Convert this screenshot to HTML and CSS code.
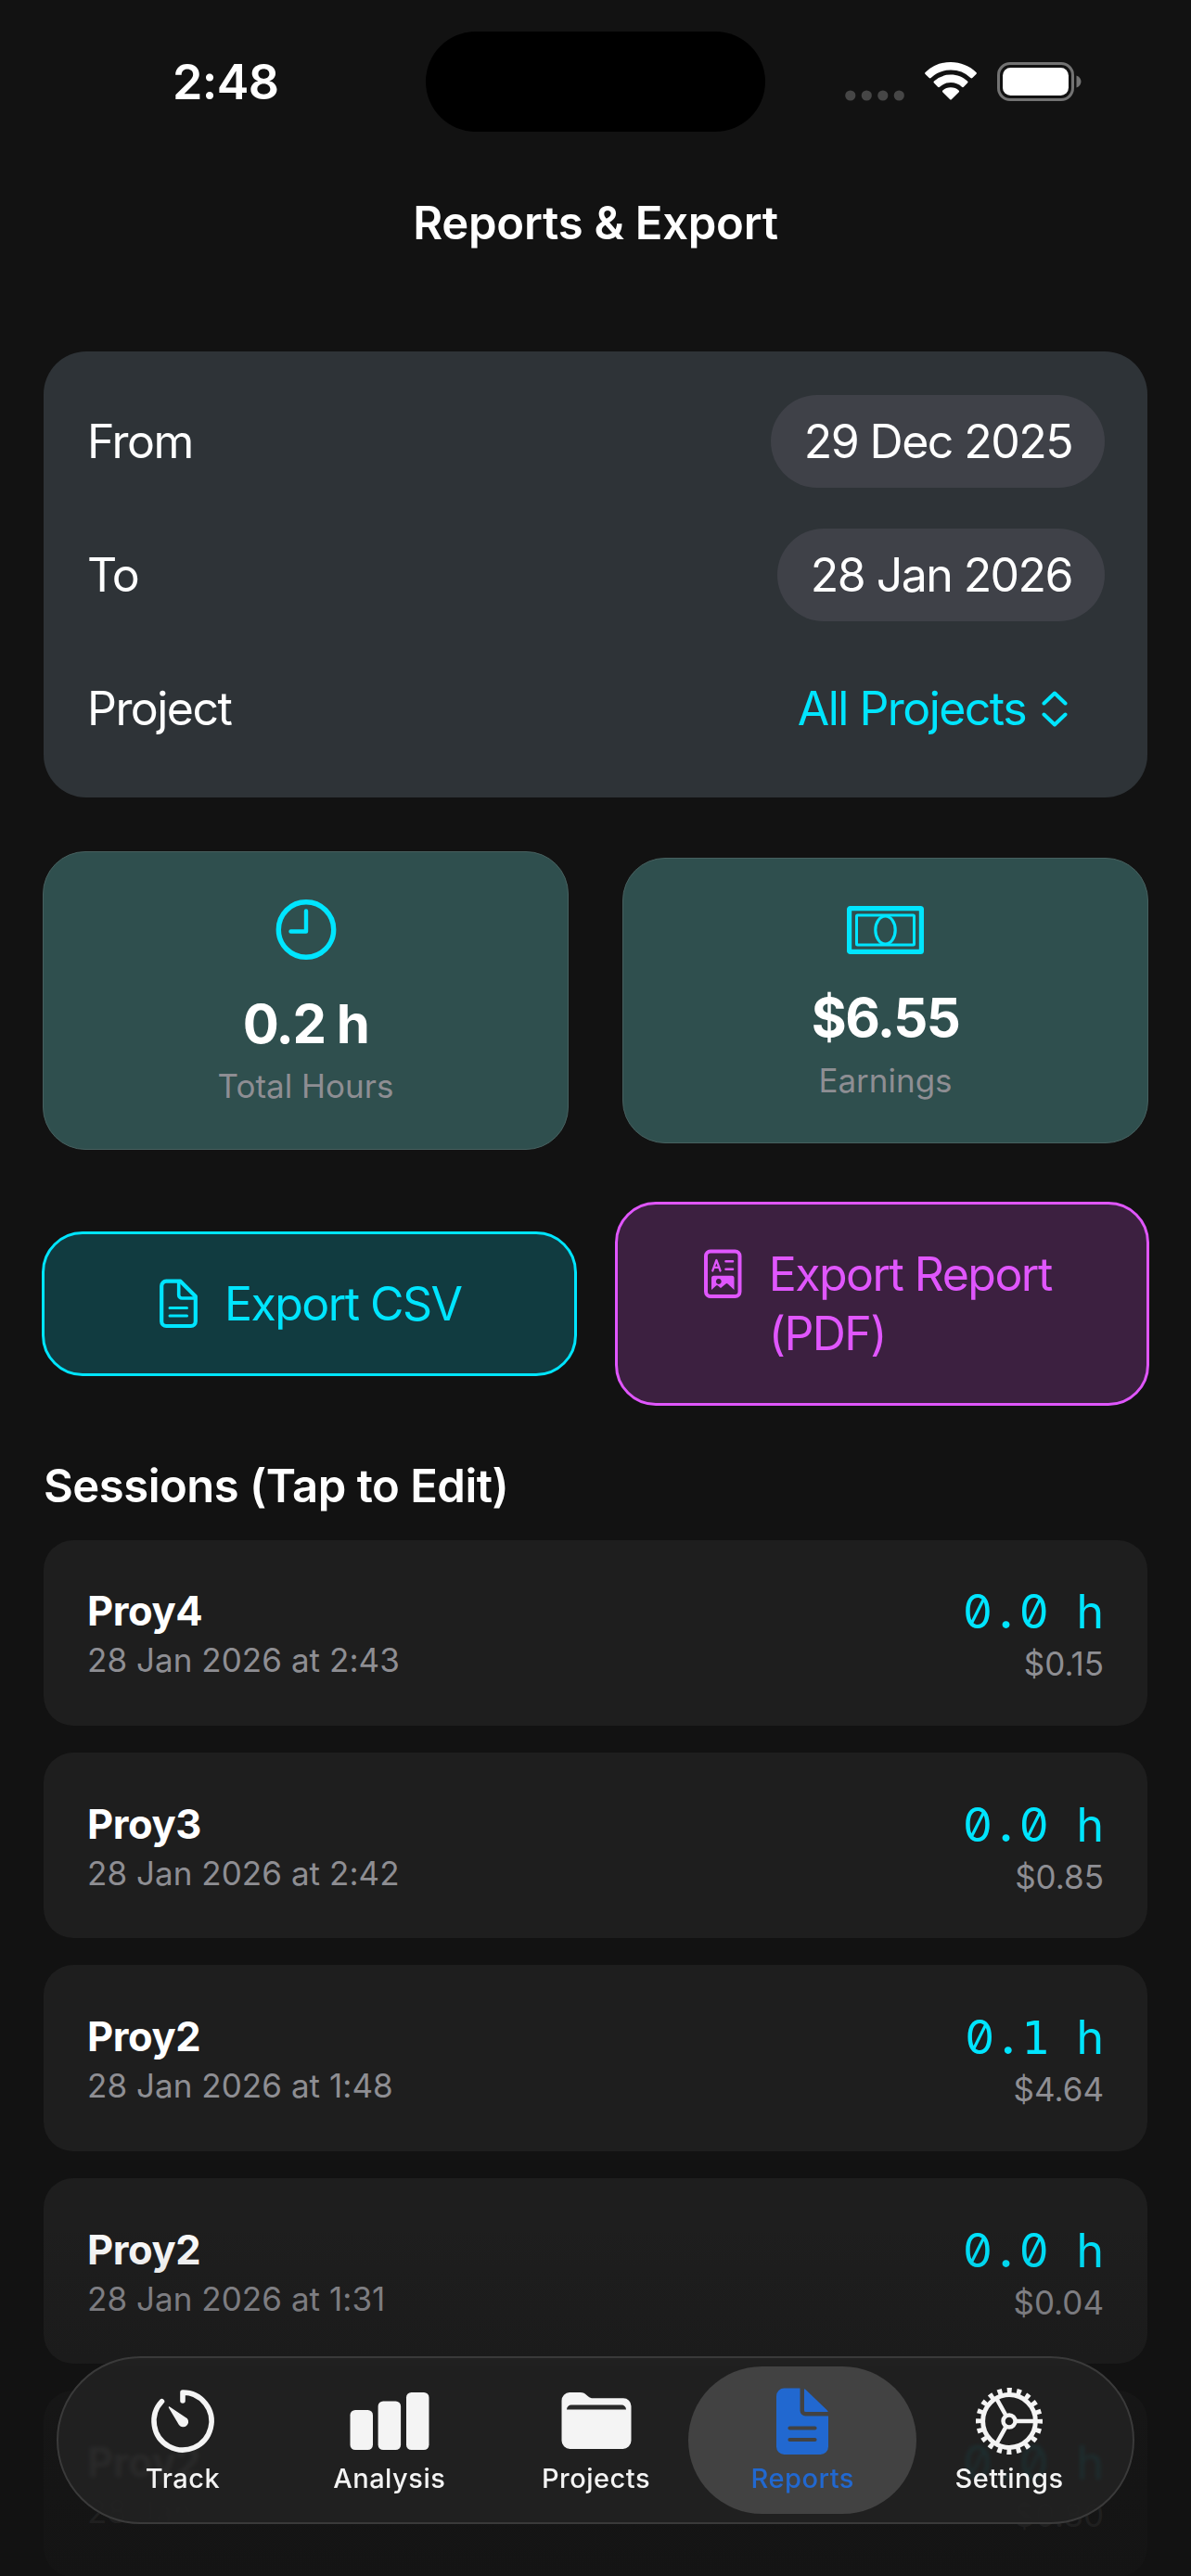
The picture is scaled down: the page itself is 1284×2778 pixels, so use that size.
FILE: index.html
```html
<!DOCTYPE html>
<html lang="en">
<head>
<meta charset="utf-8">
<title>Reports &amp; Export</title>
<link rel="stylesheet" href="styles.css">
</head>
<body>
<div class="screen">
  <header class="status">
    <div class="status-side time">2:48</div>
    <div class="island"></div>
    <div class="status-side indicators">
      <svg class="dots" width="64" height="12" viewBox="0 0 64 12" fill="#464646"><circle cx="5.8" cy="6" r="5.6"/><circle cx="23.3" cy="6" r="5.6"/><circle cx="40.8" cy="6" r="5.6"/><circle cx="58.3" cy="6" r="5.6"/></svg>
      <svg class="wifi" width="56" height="41" viewBox="0 0 56 41" fill="#fff"><path d="M28 0C38.6 0 48.3 4.1 55.4 10.9a1.4 1.4 0 0 1 0 2L51.3 17a1.4 1.4 0 0 1-1.9 0A31 31 0 0 0 28 8.600a31 31 0 0 0-21.400 8.400a1.400 1.400 0 0 1-1.900 0L.6 12.900a1.400 1.400 0 0 1 0-2A39.600 39.600 0 0 1 28 0Z"/><path d="M28 13.600c6.900 0 13.200 2.600 18 7a1.400 1.400 0 0 1 0 2l-4.100 4.100a1.400 1.400 0 0 1-1.900 0a17.800 17.800 0 0 0-24 0a1.400 1.400 0 0 1-1.900 0L10 22.600a1.400 1.400 0 0 1 0-2a26.500 26.500 0 0 1 18-7Z"/><path d="M28 27.200c3.400 0 6.400 1.200 8.600 3.200a1.400 1.400 0 0 1 0 2l-7.600 7.700a1.400 1.400 0 0 1-2 0l-7.600-7.700a1.400 1.400 0 0 1 0-2a12.800 12.800 0 0 1 8.600-3.200Z"/></svg>
      <svg class="battery" width="91" height="42" viewBox="0 0 91 42"><rect x="1.500" y="1.500" width="80" height="39" rx="12.500" fill="none" stroke="#737373" stroke-width="3"/><rect x="6" y="6" width="71" height="30" rx="8.500" fill="#fff"/><path d="M85.500 14.500c3 1 5 3.600 5 6.500s-2 5.500-5 6.500Z" fill="#737373"/></svg>
    </div>
  </header>

  <h1 class="title">Reports &amp; Export</h1>

  <main class="content">
    <section class="filters">
      <div class="filter"><span>From</span><span class="pill">29 Dec 2025</span></div>
      <div class="filter"><span>To</span><span class="pill">28 Jan 2026</span></div>
      <div class="filter"><span>Project</span><span class="picker"><span>All Projects</span><svg width="28" height="39" viewBox="0 0 28 39" fill="none" stroke="#00e5ff" stroke-width="4" stroke-linecap="round" stroke-linejoin="round"><path d="M2.500 13.500 14 2.500l11.500 11M2.500 25.500 14 36.500l11.500-11"/></svg></span></div>
    </section>

    <section class="stats">
      <div class="stat">
        <svg width="66" height="65" viewBox="0 0 66 65" fill="none" stroke="#00e5ff" stroke-linecap="round" stroke-linejoin="round"><circle cx="33" cy="32.500" r="29.700" stroke-width="5.400"/><path d="M33 12.500V34.500H16.500" stroke-width="4.400"/></svg>
        <div class="value">0.2 h</div>
        <div class="label">Total Hours</div>
      </div>
      <div class="stat">
        <svg width="83" height="52" viewBox="0 0 83 52" fill="none" stroke="#00e5ff"><rect x="2.600" y="2.600" width="77.800" height="46.800" rx="1" stroke-width="5.200"/><rect x="10.500" y="10" width="62" height="32" rx="1" stroke-width="3"/><ellipse cx="41.500" cy="26" rx="10.700" ry="15" stroke-width="3.200"/></svg>
        <div class="value">$6.55</div>
        <div class="label">Earnings</div>
      </div>
    </section>

    <section class="actions">
      <button class="action csv">
        <svg width="41" height="64" viewBox="0 -5.500 41 64" fill="none" stroke="currentColor" stroke-linejoin="round"><path d="M8 2.200H22.500L38.800 18.500V45.500a5 5 0 0 1-5 5H7.200a5 5 0 0 1-5-5V7.200a5 5 0 0 1 5-5Z" stroke-width="4.200"/><path d="M20.700 3V17a3.500 3.500 0 0 0 3.500 3.500H38" stroke-width="3.600"/><path d="M11 31H29.500M11 39.500H29.500" stroke-width="3" stroke-linecap="round"/></svg>
        <span>Export CSV</span>
      </button>
      <button class="action pdf">
        <svg width="41" height="64" viewBox="0 -5.500 41 64" fill="none" stroke="currentColor"><rect x="2" y="2" width="36.500" height="48.500" rx="5" stroke-width="4"/><path d="M9.200 23 13.400 11.500 17.600 23M10.600 19.300H16.200" stroke-width="2.200" stroke-linecap="round" stroke-linejoin="round"/><path d="M23.500 12.700H31M23.500 21.300H31" stroke-width="2.600" stroke-linecap="round"/><path fill="currentColor" stroke="none" fill-rule="evenodd" d="M10.500 28.200H30a2.500 2.500 0 0 1 2.500 2.500V43.500l-7-6.500a1.500 1.500 0 0 0-2 0l-5.500 4.500-3-2.500a1.500 1.500 0 0 0-2 0l-5 4.500V30.700a2.500 2.500 0 0 1 2.500-2.500ZM15.800 31.600a2.900 2.900 0 1 0 .01 0Z"/></svg>
        <span>Export Report<br>(PDF)</span>
      </button>
    </section>

    <h2 class="heading">Sessions (Tap to Edit)</h2>

    <section class="sessions">
      <article class="session"><div><div class="name">Proy4</div><div class="date">28 Jan 2026 at 2:43</div></div><div class="figures"><div class="duration">0<i>.</i>0 h</div><div class="amount">$0.15</div></div></article>
      <article class="session"><div><div class="name">Proy3</div><div class="date">28 Jan 2026 at 2:42</div></div><div class="figures"><div class="duration">0<i>.</i>0 h</div><div class="amount">$0.85</div></div></article>
      <article class="session"><div><div class="name">Proy2</div><div class="date">28 Jan 2026 at 1:48</div></div><div class="figures"><div class="duration">0<i>.</i><b>1</b> h</div><div class="amount">$4.64</div></div></article>
      <article class="session"><div><div class="name">Proy2</div><div class="date">28 Jan 2026 at 1:31</div></div><div class="figures"><div class="duration">0<i>.</i>0 h</div><div class="amount">$0.04</div></div></article>
      <article class="session faded"><div><div class="name">Proy2</div><div class="date">28 Jan</div></div><div class="figures"><div class="duration">0<i>.</i>0 h</div><div class="amount">$0.80</div></div></article>
    </section>
  </main>

  <div class="scrim"></div>

  <nav class="tabs">
    <a class="tab"><svg width="76" height="76" viewBox="-38 -38 76 76" fill="none" stroke="#f4f4f4" stroke-linecap="round" stroke-linejoin="round"><path d="M0-22V-31A31 31 0 1 1-22.500-21.300" stroke-width="5.600"/><path d="M-14.500-15 4.200-2.500A4.800 4.800 0 0 1-3.300 3.800Z" fill="#f4f4f4" stroke-width="1.500"/></svg><span>Track</span></a>
    <a class="tab"><svg width="86" height="76" viewBox="0 0 86 76" fill="#f4f4f4"><rect x=".5" y="26" width="24.500" height="43" rx="5.500"/><rect x="30.600" y="16.500" width="24.500" height="52.500" rx="5.500"/><rect x="61" y="7" width="24.500" height="62" rx="5.500"/></svg><span>Analysis</span></a>
    <a class="tab"><svg width="76" height="76" viewBox="0 0 76 76" fill="#f4f4f4"><path d="M9 7H20.500c3.500 0 5 1.200 7 3l1.500 1.300c1.800 1.500 3 2 5.500 2H67a8.500 8.500 0 0 1 8.500 8.500V59a9 9 0 0 1-9 9h-57A9 9 0 0 1 .5 59V16A9 9 0 0 1 9 7Z"/><path d="M6 25.500a5 5 0 0 1 5-5H65a5 5 0 0 1 5 5Z" fill="#2a2a2a"/></svg><span>Projects</span></a>
    <a class="tab active"><svg width="56" height="76" viewBox="0 0 56 76"><path d="M8.500 2.500H25.500V26.500a6 6 0 0 0 6 6H56V65.500a8.500 8.500 0 0 1-8.500 8.500h-39A8.500 8.500 0 0 1 0 65.500V11A8.500 8.500 0 0 1 8.500 2.500Z" fill="#2168d0"/><path d="M30 3.200c1 .2 1.800.8 2.600 1.700L54 25.400c.9.900 1.500 1.700 1.800 2.600H31.500a1.500 1.500 0 0 1-1.500-1.500Z" fill="#2168d0"/><path d="M14.500 45.500H41.500M14.500 58H41.500" stroke="#424242" stroke-width="4.200" stroke-linecap="round"/></svg><span>Reports</span></a>
    <a class="tab"><svg width="76" height="76" viewBox="-38 -38 76 76" fill="none" stroke="#f4f4f4"><circle r="28.400" stroke-width="5"/><circle r="33" stroke-width="6" stroke-dasharray="5 5.367" stroke-dashoffset="2.500"/><circle r="6.500" stroke-width="4.400"/><path d="M8 0H27M-4-7-13.500-24M-4 7-13.500 24" stroke-width="4.600"/></svg><span>Settings</span></a>
  </nav>
</div>
</body>
</html>
```

FILE: styles.css
```css
* { box-sizing: border-box; }
body { margin: 0; background: #121212; }

.screen {
  position: relative;
  width: 1284px;
  height: 2778px;
  overflow: hidden;
  background: #121212;
  color: #fff;
  font-family: Inter, "Liberation Sans", sans-serif;
  font-size: 50px;
}
svg { display: block; flex: none; }

/* Status bar */
.status { display: grid; grid-template-columns: 459px 366px 459px; height: 211px; padding-top: 34px; }
.status-side { height: 108px; }
.time { padding-left: 186px; font-size: 52px; font-weight: 600; line-height: 110px; letter-spacing: -0.6px; }
.island { height: 108px; border-radius: 54px; background: #000; }
.indicators { display: flex; align-items: flex-start; padding: 33px 0 0 86px; }
.dots { margin: 30px 22px 0 0; }
.wifi { margin-right: 22px; }

.title { margin: 0; height: 60px; font-size: 49px; font-weight: 600; line-height: 60px; text-align: center; letter-spacing: -0.25px; }

.content { padding: 108px 47px 0; }

/* Filters */
.filters { display: flex; flex-direction: column; gap: 44px; height: 481px; padding: 47px 46px 0 47px; border-radius: 46px; background: #2e3337; letter-spacing: -1.55px; }
.filter { display: flex; align-items: center; justify-content: space-between; height: 100px; }
.pill { padding: 0 35px 0 36px; border-radius: 50px; background: #3f4148; line-height: 100px; }
.picker { display: flex; align-items: center; gap: 17px; padding-right: 40px; color: #00e5ff; }

/* Totals */
.stats { display: grid; grid-template-columns: 1fr 1fr; gap: 58px; align-items: center; margin: 58px -1px 0; }
.stat { display: flex; flex-direction: column; align-items: center; padding: 51px 0 46.5px; border: 1px solid #47605f; border-radius: 46px; background: #2f4f4e; }
.value { margin-top: 32.5px; font-size: 58px; font-weight: 700; line-height: 72px; letter-spacing: -1.5px; }
.label { margin-top: 10.5px; color: #8e8e93; font-size: 35px; line-height: 42px; }

/* Export buttons */
.actions { display: grid; grid-template-columns: 1fr 1fr; gap: 41px; align-items: center; margin: 56px -2px 0; }
.action { display: flex; align-items: flex-start; justify-content: center; gap: 29px; padding: 43px 0; border: 3px solid; border-radius: 44px; font: inherit; line-height: 64px; letter-spacing: -1.55px; text-align: left; }
.csv { padding-left: 3px; color: #00e5ff; background: #113b40; }
.pdf { padding-right: 9px; color: #e056fd; background: #3c2040; }

.heading { margin: 57px 0 28px; font-size: 49px; font-weight: 600; line-height: 60px; letter-spacing: -0.5px; }

/* Sessions */
.sessions { display: flex; flex-direction: column; gap: 29.3px; }
.session { display: flex; align-items: center; justify-content: space-between; height: 200.2px; padding: 0 47px; border-radius: 32px; background: #1e1e1e; }
.name { font-size: 43.5px; font-weight: 700; line-height: 54px; letter-spacing: -0.4px; }
.date { margin-top: 5px; color: #8e8e93; font-size: 35px; line-height: 42px; letter-spacing: 0.05px; }
.figures { text-align: right; }
.duration { color: #00e5ff; line-height: 64px; font-feature-settings: "zero", "tnum"; white-space: nowrap; word-spacing: 16px; }
.duration i { padding: 0 7.5px; font-style: normal; font-weight: 600; }
.duration b { font: 400 50px/1 "DejaVu Sans Mono", monospace; }
.amount { margin-top: 3px; color: #8e8e93; font-size: 35px; line-height: 42px; }

/* Row scrolling out of view beneath the tab bar */
.faded { background: #181818; }
.faded .name { color: #888; }
.faded .date, .faded .amount { color: #303030; }
.faded .duration { color: #00b8cc; }

.scrim { position: absolute; inset: auto 0 0; height: 380px; background: linear-gradient(rgba(18, 18, 18, 0), rgba(18, 18, 18, 0.65)); }

/* Floating tab bar */
.tabs { position: absolute; left: 61px; top: 2541px; display: flex; width: 1162px; height: 181px; padding: 9px 11px; border: 2px solid #3a3a3a; border-radius: 91px; background: rgba(34, 34, 34, 0.85); backdrop-filter: blur(2px); }
.tab { display: flex; flex: 0 0 246px; flex-direction: column; align-items: center; padding-top: 21px; border-radius: 80px; color: #f4f4f4; font-size: 29px; font-weight: 500; line-height: 36px; letter-spacing: 0.5px; }
.tab + .tab { margin-left: -23.25px; }
.tab span { margin-top: 6px; }
.active { background: #424242; color: #2168d0; }
```
